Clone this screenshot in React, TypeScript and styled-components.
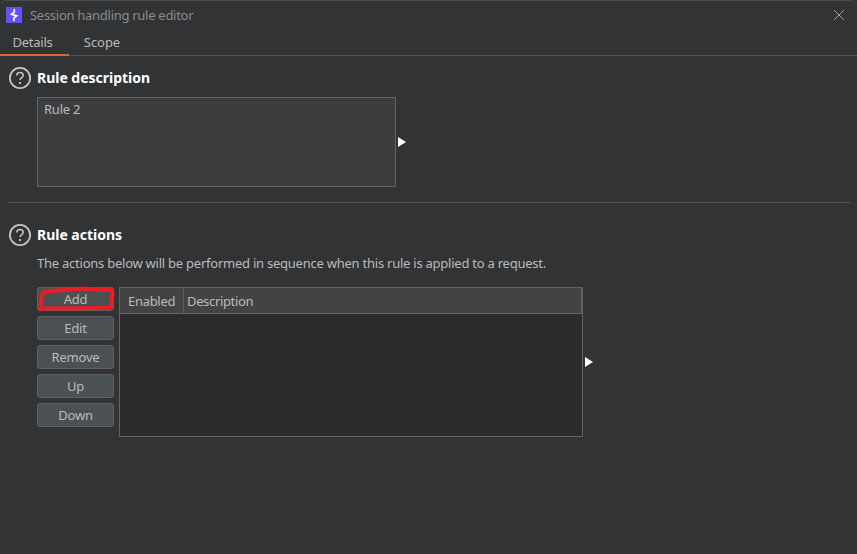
import React from "react";
import styled, { createGlobalStyle } from "styled-components";

const GlobalStyle = createGlobalStyle`
  * { box-sizing: border-box; }
  html, body { margin: 0; background: #313335; overflow: hidden; }
`;

const Dialog = styled.main`
  display: flex;
  flex-direction: column;
  width: 857px;
  height: 554px;
  border-top: 1px solid #484a4c;
  border-radius: 7px 7px 0 0;
  background: #313335;
  color: #bbbbbb;
  font: 13px/18px "Noto Sans", "Open Sans", sans-serif;
  letter-spacing: -0.24px;
  white-space: nowrap;
`;

const TitleBar = styled.header`
  display: flex;
  align-items: center;
  height: 29px;
  padding: 0 12px 0 6px;
  color: #8a8b8c;
`;

const Brand = styled.svg`
  width: 16px;
  height: 16px;
  margin-bottom: 1px;
`;

const Title = styled.span`
  flex: 1;
  margin-left: 8px;
  padding-bottom: 2px;
  letter-spacing: -0.28px;
`;

const CloseButton = styled.button`
  display: flex;
  padding: 0 0 1px;
  border: 0;
  background: none;
`;

const Tabs = styled.nav`
  display: flex;
  height: 26px;
  border-bottom: 1px solid #515355;
`;

const Tab = styled.button<{ $active?: boolean; $width: number }>`
  width: ${(p) => p.$width}px;
  height: 26px;
  padding: 0 ${(p) => (p.$active ? 4 : 0)}px 1px 0;
  border: 0;
  border-bottom: ${(p) => (p.$active ? "2px solid #d9652f" : "2px solid transparent")};
  background: none;
  color: inherit;
  font: inherit;
  letter-spacing: ${(p) => (p.$active ? -0.24 : -0.05)}px;
  text-align: center;
`;

const Section = styled.section<{ $top: number }>`
  display: flex;
  flex-direction: column;
  margin: 0 6px 0 8px;
  padding-top: ${(p) => p.$top}px;
`;

const Heading = styled.h2`
  display: flex;
  align-items: center;
  gap: 5px;
  height: 24px;
  margin: 0;
  color: #ffffff;
  font-size: 14px;
  font-weight: 700;
  line-height: 20px;
  letter-spacing: -0.02px;
`;

const Body = styled.div<{ $top: number; $gap: number }>`
  display: flex;
  align-items: flex-start;
  gap: ${(p) => p.$gap}px;
  margin: ${(p) => p.$top}px 0 0 29px;
`;

const Hint = styled.p`
  margin: 7px 0 0 29px;
`;

const DescriptionBox = styled.div`
  width: 359px;
  height: 90px;
  padding: 2px 6px;
  border: 1px solid #616365;
  background: #3c3d3f;
`;

const Expander = styled.svg`
  align-self: center;
  display: block;
  width: 8px;
  height: 10px;
  fill: #ffffff;
`;

const Divider = styled.hr`
  width: 843px;
  height: 1px;
  margin: 15px 0 0 8px;
  border: 0;
  background: #515355;
`;

const Actions = styled.div`
  position: relative;
  display: flex;
  flex-direction: column;
  gap: 5px;
`;

const ActionButton = styled.button`
  width: 77px;
  height: 24px;
  padding: 0;
  border: 1px solid #5e6062;
  border-radius: 3px;
  background: #4b5053;
  color: #bbbbbb;
  font: inherit;
  letter-spacing: -0.2px;
`;

const Marker = styled.svg`
  position: absolute;
  top: -3px;
  left: -1px;
  width: 82px;
  height: 30px;
  pointer-events: none;
`;

const Table = styled.div`
  width: 464px;
  height: 150px;
  margin-left: 5px;
  margin-right: 2px;
  border: 1px solid #616365;
  background: #2b2b2b;
`;

const TableHead = styled.div`
  display: flex;
  height: 26px;
  border-right: 1px solid #616365;
  border-bottom: 1px solid #616365;
  background: #434345;
`;

const Column = styled.div<{ $width?: number; $left: number }>`
  width: ${(p) => (p.$width ? `${p.$width}px` : "auto")};
  padding: 4px 0 0 ${(p) => p.$left}px;
  border-right: ${(p) => (p.$width ? "1px solid #5c5e60" : "0")};
  letter-spacing: ${(p) => (p.$width ? -0.3 : -0.35)}px;
`;

const BrandIcon = () => (
  <Brand viewBox="0 0 16 16">
    <path fill="#6152fb" d="M0 0h16v16H0z" />
    <path fill="none" stroke="#fff" strokeWidth="1.6" d="M8.300 2V5.200L5.400 7.300L10.700 8.900L7.900 10.900V14" />
  </Brand>
);

const HelpIcon = () => (
  <svg width="24" height="24" viewBox="0 0 24 24" fill="none" stroke="#c5c6c7">
    <circle cx="12" cy="12" r="10.1" strokeWidth="1.8" />
    <path strokeWidth="1.5" d="M8.800 9.500c0-1.900 1.300-2.900 3.200-2.900s3.200 1 3.200 2.800c0 2.300-3.200 2.100-3.200 4.700" />
    <path strokeWidth="1.900" d="M12 16v2" />
  </svg>
);

const Arrow = () => (
  <Expander viewBox="0 0 8 10">
    <path d="M0 0l8 5-8 5z" />
  </Expander>
);

const actions = ["Add", "Edit", "Remove", "Up", "Down"];

export default function App() {
  return (
    <>
      <GlobalStyle />
      <Dialog>
        <TitleBar>
          <BrandIcon />
          <Title>Session handling rule editor</Title>
          <CloseButton aria-label="Close">
            <svg width="12" height="12" viewBox="0 0 12 12" stroke="#a0a1a2">
              <path d="M1 1l10 10M11 1L1 11" />
            </svg>
          </CloseButton>
        </TitleBar>
        <Tabs>
          <Tab $active $width={69}>Details</Tab>
          <Tab $width={66}>Scope</Tab>
        </Tabs>
        <Section $top={10}>
          <Heading>
            <HelpIcon />
            Rule description
          </Heading>
          <Body $top={7} $gap={2}>
            <DescriptionBox>Rule 2</DescriptionBox>
            <Arrow />
          </Body>
        </Section>
        <Divider />
        <Section $top={20}>
          <Heading>
            <HelpIcon />
            Rule actions
          </Heading>
          <Hint>The actions below will be performed in sequence when this rule is applied to a request.</Hint>
          <Body $top={15} $gap={0}>
            <Actions>
              {actions.map((label) => (
                <ActionButton key={label}>{label}</ActionButton>
              ))}
              <Marker viewBox="0 0 82 30" fill="none" stroke="#ed1c24" strokeWidth="4" strokeLinecap="round" strokeLinejoin="round">
                <path d="M5 25.500L5 18L6.500 10L9 7.800L27 6L46 4.500L62 5.800L76 6L76.500 9L75.800 18L75 23.500L50 24.200L5 24.500" />
              </Marker>
            </Actions>
            <Table>
              <TableHead>
                <Column $width={64} $left={8}>Enabled</Column>
                <Column $left={3}>Description</Column>
              </TableHead>
            </Table>
            <Arrow />
          </Body>
        </Section>
      </Dialog>
    </>
  );
}
